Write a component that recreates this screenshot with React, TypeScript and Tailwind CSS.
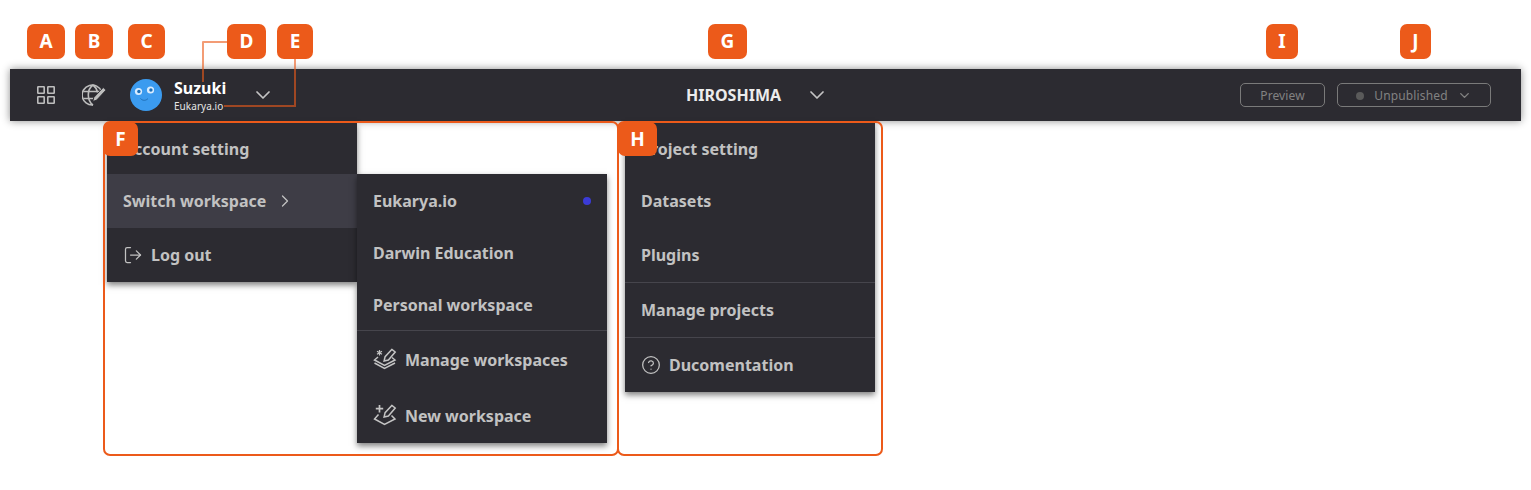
import React from "react";
import { ChevronDown, ChevronRight, CircleHelp, LogOut } from "lucide-react";

const font = "font-['Noto_Sans',sans-serif]";

function Badge({ label, className }: { label: string; className: string }) {
  return (
    <div className={`absolute flex items-center justify-center rounded-[7px] bg-[#ec5a1a] text-[19px] font-bold leading-none text-white ${className}`}>
      {label}
    </div>
  );
}

function Row({ children, className = "" }: { children: React.ReactNode; className?: string }) {
  return (
    <div className={`flex items-center px-4 text-[16px] font-bold text-[#c2c2c2] ${className}`}>{children}</div>
  );
}

function GridIcon() {
  return (
    <svg width="20" height="20" viewBox="0 0 20 20" fill="none" stroke="#bdbdbd" strokeWidth="1.6">
      <rect x="1.8" y="1.8" width="6.4" height="6.4" rx="0.4" />
      <rect x="11.8" y="1.8" width="6.4" height="6.4" rx="0.4" />
      <rect x="1.8" y="11.8" width="6.4" height="6.4" rx="0.4" />
      <rect x="11.8" y="11.8" width="6.4" height="6.4" rx="0.4" />
    </svg>
  );
}

function GlobePen() {
  return (
    <svg width="25" height="22" viewBox="0 0 25 22" fill="none" stroke="#bdbdbd" strokeWidth="1.6">
      <path d="M19.5 7.5A10 10 0 1 0 11 21" />
      <path d="M11 1C7.5 3.5 6.3 7.3 6.3 11S7.5 18.5 11 21" />
      <path d="M11 1c2.6 2 4 4.6 4.4 7.5" />
      <path d="M1.5 7.5h17M1.5 14.5h9.5" />
      <path d="M21.2 3.5l2.8 2.6-9.3 10-3.9 1.4 1-4z" fill="#bdbdbd" stroke="#2c2b31" strokeWidth="0.9" />
    </svg>
  );
}

function Avatar() {
  return (
    <svg width="32" height="32" viewBox="0 0 32 32" className="shrink-0">
      <circle cx="16" cy="16" r="16" fill="#3b9bef" />
      <circle cx="8.5" cy="12.5" r="3.6" fill="#d8ecff" />
      <circle cx="20.5" cy="11" r="3.6" fill="#d8ecff" />
      <circle cx="8.9" cy="12.5" r="1.7" fill="#1a6fb8" />
      <circle cx="20.9" cy="11" r="1.7" fill="#1a6fb8" />
      <path d="M10.5 19.5c2 2.4 5.5 2.4 7.5 0" fill="none" stroke="#1f70b8" strokeWidth="1" />
    </svg>
  );
}

function ManageIcon() {
  return (
    <svg width="24" height="22" viewBox="0 0 24 22" fill="none" stroke="#c4c4c4" strokeWidth="1.5">
      <path d="M6.5 2v5.4M4 3.2l5 3M9 3.2L4 6.2" strokeWidth="1.2" />
      <path d="M18.8 1.4l3.4 2.6-6.8 8-4.3 1 1-4.3z" />
      <path d="M5 9L1.5 12l10 5.3L22 12l-3-2.5" />
      <path d="M1.5 15l10 5.3L22 15" />
    </svg>
  );
}

function NewIcon() {
  return (
    <svg width="24" height="22" viewBox="0 0 24 22" fill="none" stroke="#c4c4c4" strokeWidth="1.5">
      <path d="M6.5 1v7.4M2.8 4.7h7.4" strokeWidth="1.7" />
      <path d="M18.8 1.4l3.4 2.6-6.8 8-4.3 1 1-4.3z" />
      <path d="M5.5 10.5L1.5 15l10 5.5L22 15l-3.5-3.5" />
    </svg>
  );
}

export default function App() {
  return (
    <div className={`relative h-[490px] w-[1531px] overflow-hidden bg-white ${font}`}>
      <div className="px-[10px] pt-[69px]">
        <header className="relative flex h-[52px] items-center bg-[#2c2b31] shadow-[0_0_8px_rgba(0,0,0,0.45)]">
          <div className="flex items-center">
            <div className="ml-[26px]"><GridIcon /></div>
            <div className="ml-[26px]"><GlobePen /></div>
            <div className="ml-[23px]"><Avatar /></div>
            <div className="ml-3 flex w-[60px] flex-col">
              <span className="text-[16px] leading-[20px] font-bold text-white">Suzuki</span>
              <span className="mt-px text-[10px] leading-[14px] tracking-[0.05px] text-[#e6e6e6]">Eukarya.io</span>
            </div>
            <ChevronDown className="ml-[17px] text-[#c4c4c4]" size={24} strokeWidth={1.75} />
          </div>
          <div className="absolute left-[676px] flex items-center">
            <span className="text-[16px] leading-[24px] font-bold text-[#ececec]">HIROSHIMA</span>
            <ChevronDown className="ml-6 text-[#c4c4c4]" size={24} strokeWidth={1.75} />
          </div>
          <div className="ml-auto mr-[30px] flex items-center gap-3">
            <div className="flex h-6 w-[85px] items-center justify-center rounded-[5px] border border-[#7a7a7a] pt-px text-[12px] tracking-[0.1px] text-[#828282]">Preview</div>
            <div className="flex h-6 w-[154px] items-center justify-center rounded-[5px] border border-[#7a7a7a] pt-px text-[12px] tracking-[0.15px] text-[#828282]">
              <span className="mr-[10px] h-2 w-2 rounded-full bg-[#5a5a5a]" />
              Unpublished
              <ChevronDown className="ml-[9px]" size={15} strokeWidth={2.25} />
            </div>
          </div>
        </header>
      </div>

      {/* Account menu */}
      <div className="absolute left-[107px] top-[123px] flex w-[250px] flex-col bg-[#2c2b31] shadow-[0_3px_6px_rgba(0,0,0,0.5)]">
        <Row className="h-[51px] pt-px">Account setting</Row>
        <Row className="h-[54px] bg-[#3e3d46]">
          Switch workspace
          <ChevronRight className="ml-[9px]" size={20} strokeWidth={1.5} />
        </Row>
        <Row className="h-[54px] gap-2">
          <LogOut size={20} strokeWidth={1.5} />
          Log out
        </Row>
      </div>

      {/* Workspace submenu */}
      <div className="absolute left-[357px] top-[174px] flex w-[250px] flex-col bg-[#2c2b31] shadow-[0_3px_6px_rgba(0,0,0,0.5)]">
        <Row className="h-[53px] justify-between">
          Eukarya.io
          <span className="h-2 w-2 rounded-full bg-[#3b3bd6]" />
        </Row>
        <Row className="h-[52px]">Darwin Education</Row>
        <Row className="h-[52px] border-b border-[#46454c]">Personal workspace</Row>
        <Row className="h-[56px] gap-2"><ManageIcon /><span className="mt-[2px]">Manage workspaces</span></Row>
        <Row className="h-[56px] gap-2"><NewIcon /><span className="mt-[2px]">New workspace</span></Row>
      </div>

      {/* Project menu */}
      <div className="absolute left-[625px] top-[123px] flex w-[250px] flex-col bg-[#2c2b31] shadow-[0_3px_6px_rgba(0,0,0,0.5)]">
        <Row className="h-[52px]">Project setting</Row>
        <Row className="h-[52px]">Datasets</Row>
        <Row className="h-[56px] border-b border-[#46454c]">Plugins</Row>
        <Row className="h-[55px] border-b border-[#46454c]">Manage projects</Row>
        <Row className="h-[54px] gap-2">
          <CircleHelp size={20} strokeWidth={1.5} />
          Ducomentation
        </Row>
      </div>

      {/* Annotation frames */}
      <div className="absolute left-[103px] top-[121px] h-[335px] w-[516px] rounded-[7px] border-2 border-[#ec5a1a]" />
      <div className="absolute left-[617px] top-[121px] h-[335px] w-[266px] rounded-[7px] border-2 border-[#ec5a1a]" />

      {/* Annotation connectors */}
      <div className="absolute left-[202px] top-[41px] h-[41px] w-[26px] rounded-tl-[1px] border-l-2 border-t-2 border-[#ec5a1a]/60" />
      <div className="absolute left-[224px] top-[58px] h-[49px] w-[72px] border-b-2 border-r-2 border-[#ec5a1a]/60" />

      <Badge label="A" className="left-[27px] top-[24px] h-[35px] w-[38px]" />
      <Badge label="B" className="left-[75px] top-[24px] h-[35px] w-[38px]" />
      <Badge label="C" className="left-[128px] top-[24px] h-[35px] w-[37px]" />
      <Badge label="D" className="left-[227px] top-[24px] h-[35px] w-[39px]" />
      <Badge label="E" className="left-[277px] top-[24px] h-[35px] w-[36px]" />
      <Badge label="G" className="left-[708px] top-[24px] h-[35px] w-[39px]" />
      <Badge label="I" className="left-[1266px] top-[24px] h-[35px] w-[32px]" />
      <Badge label="J" className="left-[1400px] top-[24px] h-[35px] w-[31px]" />
      <Badge label="F" className="left-[103px] top-[122px] h-[34px] w-[35px]" />
      <Badge label="H" className="left-[618px] top-[122px] h-[34px] w-[39px]" />
    </div>
  );
}
